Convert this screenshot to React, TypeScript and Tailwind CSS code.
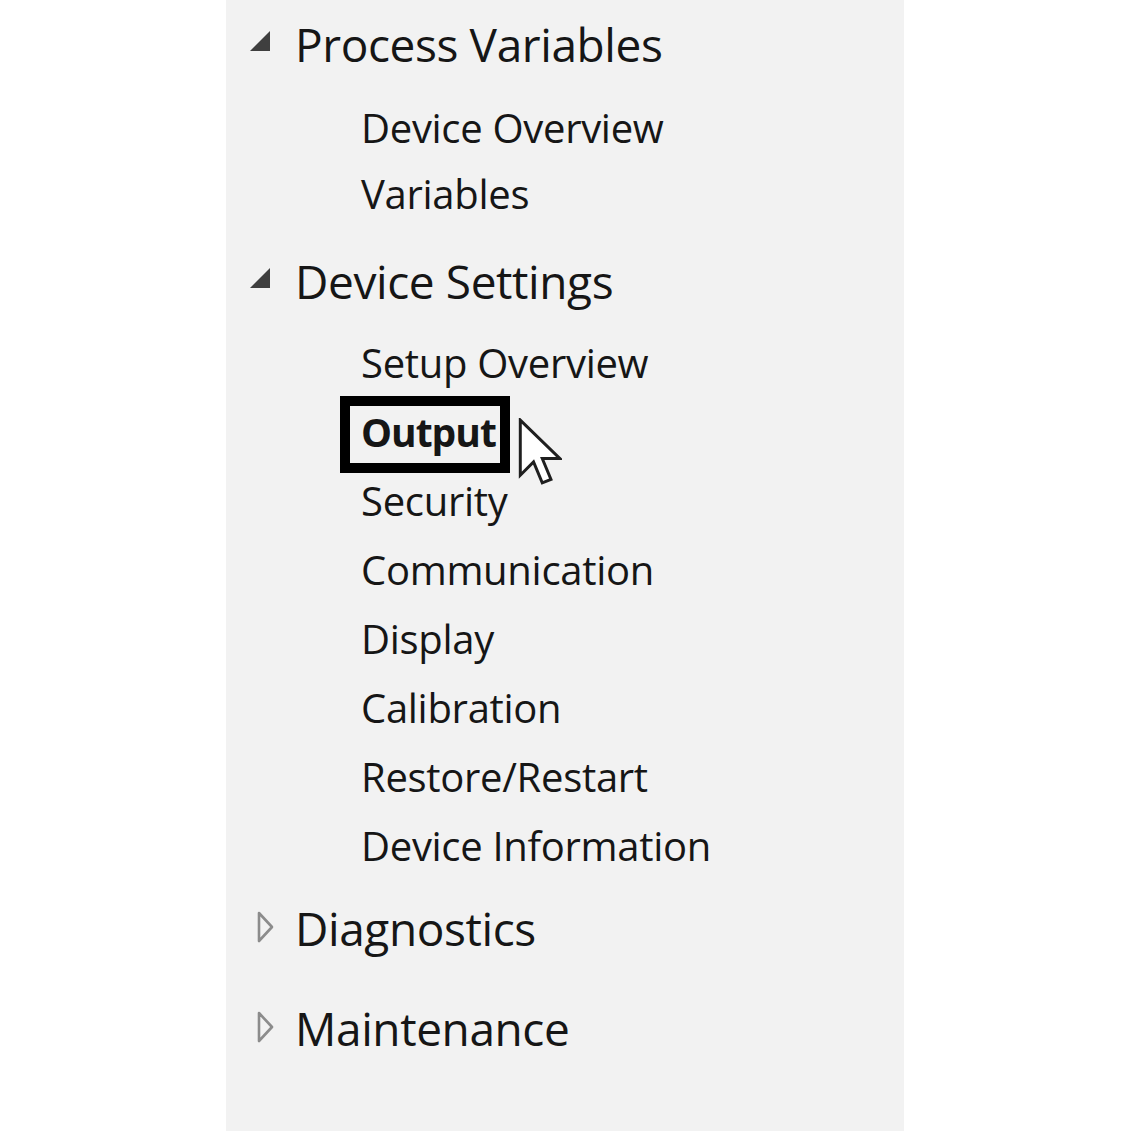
import React from 'react';

type Section = {
    title: string;
    expanded: boolean;
    items: string[];
    rowHeight: string;
};

const sections: Section[] = [
    { title: 'Process Variables', expanded: true, items: ['Device Overview', 'Variables'], rowHeight: 'h-[66px]' },
    {
        title: 'Device Settings',
        expanded: true,
        items: [
            'Setup Overview',
            'Output',
            'Security',
            'Communication',
            'Display',
            'Calibration',
            'Restore/Restart',
            'Device Information',
        ],
        rowHeight: 'h-[69px]',
    },
    { title: 'Diagnostics', expanded: false, items: [], rowHeight: 'h-[69px]' },
    { title: 'Maintenance', expanded: false, items: [], rowHeight: 'h-[69px]' },
];

const ExpandedGlyph = () => (
    <svg width="24" height="24" viewBox="0 0 24 24">
        <polygon points="22,2 22,22 2,22" fill="#3f3f3f" />
    </svg>
);

const CollapsedGlyph = () => (
    <svg width="20" height="32" viewBox="0 0 20 32">
        <polygon points="3,2 16,16 3,30" fill="none" stroke="#8c8c8c" strokeWidth="2.6" strokeLinejoin="round" />
    </svg>
);

const Cursor = () => (
    <svg width="44" height="68" viewBox="0 0 12.5 19.5" className="absolute left-[157px] top-[6px]">
        <path
            d="M0.6 0.6 V16.4 L4.4 12.6 L6.9 18.6 L9.4 17.6 L6.9 11.6 H11.9 Z"
            fill="#ffffff"
            stroke="#1f1f1f"
            strokeWidth="0.85"
            strokeLinejoin="miter"
        />
    </svg>
);

const SubItem: React.FC<{ label: string; rowHeight: string }> = ({ label, rowHeight }) => {
    const selected = label === 'Output';
    return (
        <div className={`${rowHeight} flex items-center pl-[135px]`}>
            <span
                className={`relative leading-none whitespace-nowrap ${
                    selected ? 'font-bold text-[39px] tracking-[-1px]' : 'text-[40px] tracking-[-0.3px]'
                }`}
            >
                {selected && (
                    <span className="absolute -left-[21px] -top-[16px] w-[170px] h-[77px] border-[10px] border-black" />
                )}
                {label}
                {selected && <Cursor />}
            </span>
        </div>
    );
};

const App: React.FC = () => {
    return (
        <div className="min-h-[1131px] bg-white flex">
            <nav className="ml-[226px] w-[678px] min-h-[1131px] bg-[#f2f2f2] pt-[14px] font-['Open_Sans',sans-serif] text-[#161616]">
                {sections.map((section, i) => (
                    <div
                        key={section.title}
                        className={i === 1 ? 'mt-[24px]' : i === 2 ? 'mt-[18px]' : i === 3 ? 'mt-[40px]' : ''}
                    >
                        <div className="h-[60px] flex items-center">
                            <div className="w-[69px] pl-[22px] flex items-center">
                                {section.expanded ? (
                                    <span className="-mt-[6px]">
                                        <ExpandedGlyph />
                                    </span>
                                ) : (
                                    <span className="pl-[8px] -mt-[2px]">
                                        <CollapsedGlyph />
                                    </span>
                                )}
                            </div>
                            <span className="text-[46px] leading-none tracking-[-0.4px] whitespace-nowrap">
                                {section.title}
                            </span>
                        </div>
                        {section.items.length > 0 && (
                            <div className={i === 0 ? 'mt-[21px]' : 'mt-[17px]'}>
                                {section.items.map((item) => (
                                    <SubItem key={item} label={item} rowHeight={section.rowHeight} />
                                ))}
                            </div>
                        )}
                    </div>
                ))}
            </nav>
        </div>
    );
};

export default App;
